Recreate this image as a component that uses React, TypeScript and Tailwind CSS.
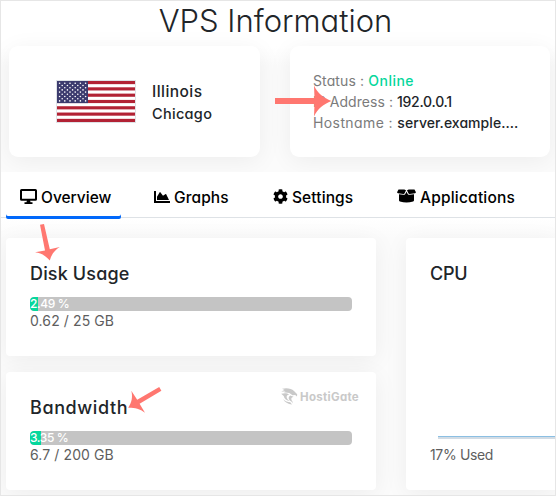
import React from "react";
import { FaChartArea, FaCog } from "react-icons/fa";

const shadow = "shadow-[0_4px_24px_rgba(0,0,0,0.06)]";

function Flag() {
  const stars = [];
  for (let row = 0; row < 9; row++) {
    const count = row % 2 === 0 ? 6 : 5;
    for (let col = 0; col < count; col++) {
      stars.push(
        <circle key={`${row}-${col}`} cx={2.6 + col * 5.2 + (row % 2 ? 2.6 : 0)} cy={2.3 + row * 2.2} r="0.8" fill="#fff" />
      );
    }
  }
  return (
    <svg className="h-[43px] w-[80px] shrink-0 border border-[#dee2e6]" viewBox="0 0 78 41" preserveAspectRatio="none">
      <rect width="78" height="41" fill="#fff" />
      {[0, 1, 2, 3, 4, 5, 6].map((i) => (
        <rect key={i} y={(i * 2 * 41) / 13} width="78" height={41 / 13} fill="#b22234" />
      ))}
      <rect width="31" height="22.1" fill="#3c3b6e" />
      {stars}
    </svg>
  );
}

function DesktopIcon() {
  return (
    <svg className="h-[15px] w-[17px]" viewBox="0 0 17 15">
      <rect x="1" y="1" width="15" height="9.8" rx="0.6" fill="none" stroke="#000" strokeWidth="2" />
      <path d="M7 11h3l.5 2.2h2V15h-8v-1.8h2z" fill="#000" />
    </svg>
  );
}

function BoxIcon() {
  return (
    <svg className="h-[14px] w-[19px]" viewBox="0 0 19 14" fill="#000">
      <path d="M1.5.4h5.8L9 1.3 7.6 4.3c-.3.5-.8.7-1.3.6L1 4.3C.3 4.1 0 3.7.2 3.1z" />
      <path d="M17.5.4h-5.8L10 1.3l1.4 3c.3.5.8.7 1.3.6l5.3-.6c.7-.2 1-.6.8-1.2z" />
      <path d="M2 5.3l4.3.5c.9.1 1.6-.2 2-.9l1.2-2.2 1.2 2.2c.4.7 1.1 1 2 .9l4.3-.5v5.9c0 .7-.3 1.1-.9 1.2-4.4 1.4-8.8 1.4-13.2 0-.6-.1-.9-.5-.9-1.2z" />
    </svg>
  );
}

function Watermark() {
  return (
    <div className="flex h-[18px] items-center gap-[2px] text-[#c9c9c9]">
      <svg className="h-[17px] w-[17px]" viewBox="0 0 17 17" fill="currentColor">
        <path d="M1 .8C6-.4 10.500.6 13 3l3.200 3.300-.2 2.200-1.800-1.400-2.800.2C9 4.900 6.500 4.300 3 4.600l1.600-1.200L.2 3.600 3.600 2z" />
        <path d="M.2 5.800C3.500 5 6 5 8.300 6.600 6.600 6.700 5.700 7.600 5.600 9c.2 2 1.800 3.200 3.100 4.100C5.700 12.700 3.300 11 2.700 8z" />
        <path d="M2 11c2.300 2.400 4.600 3 7.200 3.200l1.800 2.200C7 16 3.800 14.500 2 11z" />
        <path d="M9.200 7.500l3.400 1.200c-1.800.4-2.500 1.300-2.200 2.700.3 1.500 1.500 2 1.700 4-.5-1-1.200-1.400-2.100-2.100C7.600 12 6.700 9.200 9.200 7.500z" />
      </svg>
      <span className="pt-[1px] text-[11.5px] font-bold leading-[18px] tracking-[0.3px]">HostiGate</span>
    </div>
  );
}

function Meter({ percent, detail }: { percent: number; detail: string }) {
  return (
    <>
      <div className="relative h-[14px] w-[322px] overflow-hidden rounded-[4px] bg-[#c4c4c4]">
        <div className="h-full rounded-l-[4px] bg-[#06d79c]" style={{ width: `${percent}%` }} />
        <span className="absolute inset-y-0 left-0 whitespace-nowrap text-[12px] font-medium leading-[14px] tracking-[-0.4px] text-white">{percent} %</span>
      </div>
      <div className="h-[20px] whitespace-nowrap text-[14px] leading-[20px] tracking-[0.1px] text-[#5e5e5e]">{detail}</div>
    </>
  );
}

function Arrows() {
  return (
    <svg className="pointer-events-none absolute -left-px -top-px h-[496px] w-[556px]" viewBox="0 0 556 496" fill="#ff7770">
      <path d="M275 98h39.500l-.5-12.500c3.500 7.500 9.500 12.500 17.500 15.500-8 3-14 8-17.500 15.500l.5-12.500h-39.500z" />
      <path d="M40 224.700l4-.8 5.800 25.400 10-2.400c-5 3.200-8.400 7.300-10 13.700-4.300-5.100-8.700-7.600-14.800-8.300l10-1.800z" />
      <path d="M159.200 387l2.200 3.800-21.800 13 5.400 9c-5.200-4-10.400-5.100-16.800-5 3.500-5.400 4.700-10.600 3.100-17l5.900 9z" />
    </svg>
  );
}

export default function App() {
  return (
    <div className="relative flex h-[496px] w-[556px] flex-col overflow-hidden border border-[#e6e6e6] bg-white font-['Inter','Open_Sans',sans-serif] text-[#212529] [font-feature-settings:'cv11']">
      <header className="flex h-[45px] shrink-0 justify-center pr-[5px]">
        <h1 className="whitespace-nowrap text-[31px] font-light leading-[39px] tracking-[0px]">VPS Information</h1>
      </header>

      <section className="flex h-[126px] shrink-0 gap-[30px] bg-[linear-gradient(#ffffff,#fbfbfb_20px)] pl-[8px]">
        <div className={`flex h-[111px] w-[251px] items-center gap-[16px] rounded-[9px] bg-white pl-[47px] ${shadow}`}>
          <Flag />
          <div className="pt-[2px] font-medium">
            <div className="text-[15.5px] leading-[23px] tracking-[0.45px]">Illinois</div>
            <div className="text-[14.5px] leading-[22px] tracking-[0.3px]">Chicago</div>
          </div>
        </div>
        <div className={`h-[111px] w-[260px] whitespace-nowrap rounded-[9px] bg-white pl-[23px] pt-[24px] text-[14px] leading-[21px] tracking-[0.12px] text-[#7b7b7b] ${shadow}`}>
          <div>Status : <span className="font-medium tracking-[0.5px] text-[#06d79c]">Online</span></div>
          <div className="tracking-[0.05px]">IP Address : <span className="font-medium tracking-[-0.25px] text-[#212529]">192.0.0.1</span></div>
          <div className="tracking-[0.4px]">Hostname : <span className="font-medium tracking-[0.05px] text-[#212529]">server.example....</span></div>
        </div>
      </section>

      <nav className="relative flex h-[46px] shrink-0 border-b border-[#dee2e6] bg-white pl-[5px] text-[15.5px] font-medium leading-[23px] text-black">
        <div className="-mb-[2px] flex h-[47px] w-[115px] gap-[4px] rounded-[2px] pl-[14px] pt-[14px] shadow-[inset_0_-3px_0_#0168fa]">
          <span className="pt-[3px]"><DesktopIcon /></span><span>Overview</span>
        </div>
        <div className="flex w-[119px] gap-[4px] pl-[33px] pt-[14px]">
          <FaChartArea className="mt-[3px] size-[16px]" /><span className="tracking-[0.1px]">Graphs</span>
        </div>
        <div className="flex w-[125px] gap-[4px] pl-[33px] pt-[14px]">
          <FaCog className="mt-[3px] size-[15px]" /><span className="tracking-[0.1px]">Settings</span>
        </div>
        <div className="flex gap-[4px] pl-[32px] pt-[14px]">
          <span className="pt-[3px]"><BoxIcon /></span><span className="tracking-[0.2px]">Applications</span>
        </div>
      </nav>

      <main className="flex min-h-0 grow gap-[30px] bg-[linear-gradient(#ffffff,#fbfbfb_20px)] pl-[5px] pt-[20px]">
        <div className="flex w-[370px] shrink-0 flex-col gap-[16px]">
          <section className={`h-[118px] rounded-[4px] bg-white pl-[24px] pt-[22px] ${shadow}`}>
            <h2 className="mb-[10px] text-[18px] font-medium leading-[27px] tracking-[0.15px]">Disk Usage</h2>
            <Meter percent={2.49} detail="0.62 / 25 GB" />
          </section>
          <section className={`h-[118px] rounded-[4px] bg-white pl-[24px] pt-[22px] ${shadow}`}>
            <div className="mb-[10px] flex h-[27px] justify-between pr-[17px]">
              <h2 className="text-[18px] font-medium leading-[27px] tracking-[0.6px]">Bandwidth</h2>
              <div className="-mt-[7px]"><Watermark /></div>
            </div>
            <Meter percent={3.35} detail="6.7 / 200 GB" />
          </section>
        </div>
        <section className={`flex h-[252px] w-[150px] shrink-0 flex-col rounded-l-[4px] bg-white pl-[24px] pt-[22px] ${shadow}`}>
          <h2 className="text-[18px] font-medium leading-[27px] tracking-[-0.3px]">CPU</h2>
          <div className="ml-[8px] mt-[149px] h-[3px] border-t border-[#8bbfe3] bg-[#d2dce5]" />
          <div className="mt-[5px] text-[14px] leading-[21px] tracking-[-0.35px] text-[#5e5e5e]">17% Used</div>
        </section>
      </main>
      <Arrows />
    </div>
  );
}
